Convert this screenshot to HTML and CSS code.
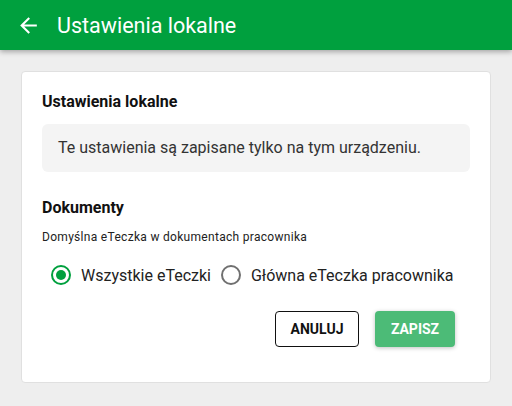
FILE: index.html
```html
<!DOCTYPE html>
<html lang="pl">
<head>
<meta charset="utf-8">
<link rel="stylesheet" href="styles.css">
</head>
<body>
<header class="appbar">
  <svg class="back" width="24" height="24" viewBox="0 0 24 24"><path d="M20 11H7.83l5.59-5.59L12 4l-8 8 8 8 1.41-1.41L7.83 13H20v-2z" fill="#fff"/></svg>
  <h1 class="appbar-title">Ustawienia lokalne</h1>
</header>
<main class="content">
  <section class="card">
    <h2 class="section-title">Ustawienia lokalne</h2>
    <div class="info">Te ustawienia są zapisane tylko na tym urządzeniu.</div>
    <h2 class="section-title docs">Dokumenty</h2>
    <div class="label">Domyślna eTeczka w dokumentach pracownika</div>
    <div class="radios">
      <label class="radio"><span class="circle checked"></span>Wszystkie eTeczki</label>
      <label class="radio"><span class="circle"></span>Główna eTeczka pracownika</label>
    </div>
    <div class="actions">
      <button class="btn outline">ANULUJ</button>
      <button class="btn primary">ZAPISZ</button>
    </div>
  </section>
</main>
</body>
</html>
```
FILE: styles.css
```css
* { box-sizing: border-box; }
html, body { margin: 0; padding: 0; }
body {
  background: #eeeeee;
  font-family: Roboto, "Liberation Sans", sans-serif;
  width: 512px;
  height: 406px;
  overflow: hidden;
}
.appbar {
  height: 50px;
  background: #00a03e;
  display: flex;
  align-items: center;
  padding-left: 16px;
  box-shadow: 0 2px 5px rgba(0,0,0,0.3);
  position: relative;
  z-index: 1;
}
.back { display: block; width: 25px; height: 25px; }
.appbar-title {
  margin: 0 0 0 16px;
  color: #fff;
  font-size: 21.5px;
  font-weight: 400;
}
.content {
  padding: 21px 21px 0 21px;
}
.card {
  background: #fff;
  border: 1px solid #e0e0e0;
  border-radius: 4px;
  padding: 20px 20px 35px 20px;
  height: 312px;
}
.section-title {
  margin: 0;
  font-size: 16px;
  font-weight: 700;
  color: #111;
  line-height: 20px;
}
.info {
  margin-top: 12px;
  background: #f4f4f4;
  border-radius: 6px;
  padding: 14px 16px;
  font-size: 16px;
  color: #333;
  line-height: 20px;
}
.docs { margin-top: 26px; }
.label {
  margin-top: 12px;
  font-size: 12px;
  letter-spacing: 0.3px;
  color: #222;
}
.radios {
  display: flex;
  margin-top: 21px;
  padding-left: 9px;
  gap: 10px;
}
.radio {
  display: flex;
  align-items: center;
  font-size: 16px;
  color: #222;
}
.circle {
  width: 20px;
  height: 20px;
  border: 2px solid #707070;
  border-radius: 50%;
  margin-right: 10px;
  position: relative;
}
.circle.checked { border-color: #00a03e; }
.circle.checked::after {
  content: "";
  position: absolute;
  left: 3px; top: 3px;
  width: 10px; height: 10px;
  border-radius: 50%;
  background: #00a03e;
}
.actions {
  display: flex;
  justify-content: flex-end;
  gap: 16px;
  margin-top: 26px;
  padding-right: 15px;
}
.btn {
  font-family: Roboto, "Liberation Sans", sans-serif;
  font-weight: 700;
  font-size: 14px;
  height: 36px;
  border-radius: 4px;
  cursor: pointer;
}
.outline {
  background: #fff;
  border: 1px solid #111;
  color: #111;
  width: 84px;
}
.primary {
  background: #4cbb77;
  border: none;
  color: #fff;
  width: 80px;
  box-shadow: 0 1px 4px rgba(0,0,0,0.25);
}
```
